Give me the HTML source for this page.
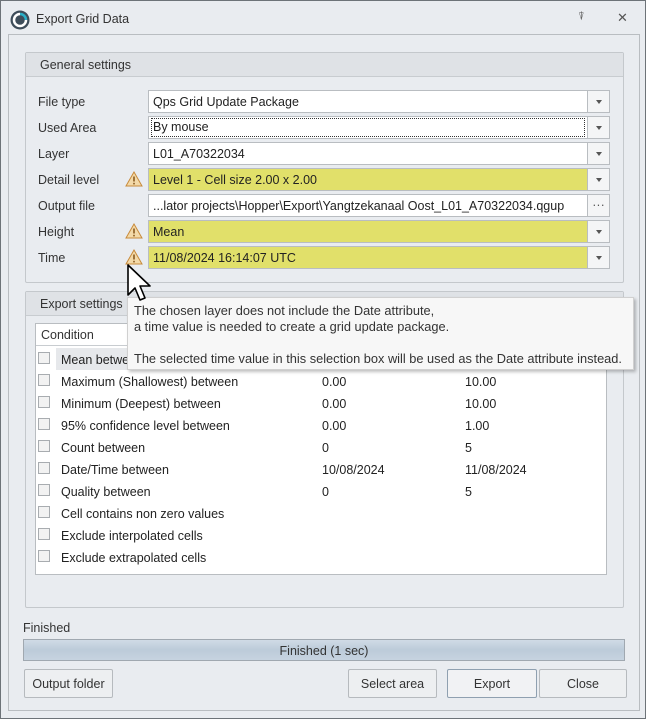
<!DOCTYPE html><html><head><style>
*{box-sizing:border-box;margin:0;padding:0}
body{width:646px;height:719px;background:#e9ecf0;font-family:"Liberation Sans",sans-serif;font-size:12.5px;color:#222;position:relative;overflow:hidden;border:1px solid #6d7378;white-space:nowrap}
.a{position:absolute}
.grp{position:absolute;border:1px solid #c4c8cc;border-radius:2px;background:#e9ecf0}
.gh{height:24px;background:#dfe2e6;border-bottom:1px solid #c8ccd0;padding:5px 14px;color:#333}
.lbl{position:absolute;left:37px;color:#333}
.fld{position:absolute;left:147px;width:440px;height:23px;border:1px solid #b9bdc1;background:#fff;padding:4px 4px;white-space:nowrap;overflow:hidden}
.y{background:#e1e06a}
.dd{position:absolute;left:586px;width:23px;height:23px;border:1px solid #b9bdc1;background:#f4f5f6}
.dd:after{content:"";position:absolute;left:8px;top:9px;border-left:3.5px solid transparent;border-right:3.5px solid transparent;border-top:4px solid #555}
.warn{position:absolute;left:124px}
.cb{position:absolute;left:37px;width:12px;height:12px;border:1px solid #a8acb0;background:#f2f2f2}
.btn{position:absolute;top:668px;height:29px;border:1px solid #b6babe;border-radius:2px;background:#edeff1;text-align:center;padding-top:7px;color:#333}
</style></head><body>
<svg class="a" style="left:9px;top:9px" width="20" height="20"><circle cx="10" cy="10" r="9.5" fill="#3e4d5a"/><path d="M10 4a6 6 0 1 0 6 6" stroke="#fff" stroke-width="2.5" fill="none"/><path d="M10 4a6 6 0 0 1 6 6" stroke="#2bb0c8" stroke-width="2.5" fill="none"/></svg>
<div class="a" style="left:35px;top:11px;color:#333">Export Grid Data</div>
<div class="a" style="left:577px;top:10px;font-size:11px;color:#555">⍒</div>
<div class="a" style="left:616px;top:9px;font-size:13px;color:#555">✕</div>
<div class="a" style="left:7px;top:33px;width:632px;height:677px;border:1px solid #b9bdc1"></div>

<div class="grp" style="left:24px;top:51px;width:599px;height:231px"><div class="gh">General settings</div></div>
<div class="lbl" style="top:94px">File type</div><div class="fld" style="top:89px">Qps Grid Update Package</div><div class="dd" style="top:89px"></div>
<div class="lbl" style="top:120px">Used Area</div><div class="fld" style="top:115px"><span style="outline:1px dotted #333;display:block;margin:-2px -1px;padding:1px 1px;height:17px">By mouse</span></div><div class="dd" style="top:115px"></div>
<div class="lbl" style="top:146px">Layer</div><div class="fld" style="top:141px">L01_A70322034</div><div class="dd" style="top:141px"></div>
<div class="lbl" style="top:172px">Detail level</div><div class="fld y" style="top:167px">Level 1 - Cell size 2.00 x 2.00</div><div class="dd" style="top:167px"></div>
<div class="lbl" style="top:198px">Output file</div><div class="fld" style="top:193px">...lator projects\Hopper\Export\Yangtzekanaal Oost_L01_A70322034.qgup</div><div class="a" style="left:586px;top:193px;width:23px;height:23px;border:1px solid #b9bdc1;background:#f4f5f6;text-align:center;color:#555;padding-top:3px">···</div>
<div class="lbl" style="top:224px">Height</div><div class="fld y" style="top:219px">Mean</div><div class="dd" style="top:219px"></div>
<div class="lbl" style="top:250px">Time</div><div class="fld y" style="top:245px">11/08/2024 16:14:07 UTC</div><div class="dd" style="top:245px"></div>
<svg class="warn" style="top:170px" width="18" height="16"><path d="M9 1L17 15H1Z" fill="#f3d9a8" stroke="#c88a3a"/><rect x="8.2" y="5.5" width="1.6" height="5" fill="#8a5a20"/><rect x="8.2" y="11.8" width="1.6" height="1.6" fill="#8a5a20"/></svg>
<svg class="warn" style="top:222px" width="18" height="16"><path d="M9 1L17 15H1Z" fill="#f3d9a8" stroke="#c88a3a"/><rect x="8.2" y="5.5" width="1.6" height="5" fill="#8a5a20"/><rect x="8.2" y="11.8" width="1.6" height="1.6" fill="#8a5a20"/></svg>
<svg class="warn" style="top:248px" width="18" height="16"><path d="M9 1L17 15H1Z" fill="#f3d9a8" stroke="#c88a3a"/><rect x="8.2" y="5.5" width="1.6" height="5" fill="#8a5a20"/><rect x="8.2" y="11.8" width="1.6" height="1.6" fill="#8a5a20"/></svg>

<div class="grp" style="left:24px;top:290px;width:599px;height:317px"><div class="gh">Export settings</div></div>
<div class="a" style="left:34px;top:322px;width:572px;height:252px;border:1px solid #b9bdc1;background:#fff"></div>
<div class="a" style="left:35px;top:323px;width:570px;height:22px;border-bottom:1px solid #c8ccd0;padding:4px 5px;color:#333">Condition</div>
<div class="a" style="left:55px;top:347px;width:550px;height:22px;background:#e6e8eb"></div>
<div class="cb" style="top:351px"></div><div class="a" style="left:60px;top:352px">Mean between</div>
<div class="cb" style="top:373px"></div><div class="a" style="left:60px;top:374px">Maximum (Shallowest) between</div><div class="a" style="left:321px;top:374px">0.00</div><div class="a" style="left:464px;top:374px">10.00</div>
<div class="cb" style="top:395px"></div><div class="a" style="left:60px;top:396px">Minimum (Deepest) between</div><div class="a" style="left:321px;top:396px">0.00</div><div class="a" style="left:464px;top:396px">10.00</div>
<div class="cb" style="top:417px"></div><div class="a" style="left:60px;top:418px">95% confidence level between</div><div class="a" style="left:321px;top:418px">0.00</div><div class="a" style="left:464px;top:418px">1.00</div>
<div class="cb" style="top:439px"></div><div class="a" style="left:60px;top:440px">Count between</div><div class="a" style="left:321px;top:440px">0</div><div class="a" style="left:464px;top:440px">5</div>
<div class="cb" style="top:461px"></div><div class="a" style="left:60px;top:462px">Date/Time between</div><div class="a" style="left:321px;top:462px">10/08/2024</div><div class="a" style="left:464px;top:462px">11/08/2024</div>
<div class="cb" style="top:483px"></div><div class="a" style="left:60px;top:484px">Quality between</div><div class="a" style="left:321px;top:484px">0</div><div class="a" style="left:464px;top:484px">5</div>
<div class="cb" style="top:505px"></div><div class="a" style="left:60px;top:506px">Cell contains non zero values</div>
<div class="cb" style="top:527px"></div><div class="a" style="left:60px;top:528px">Exclude interpolated cells</div>
<div class="cb" style="top:549px"></div><div class="a" style="left:60px;top:550px">Exclude extrapolated cells</div>

<div class="a" style="left:126px;top:296px;width:507px;height:73px;background:#f7f7f7;border:1px solid #d0d0d0;box-shadow:2px 2px 3px rgba(0,0,0,.25);padding:5px 6px;line-height:16px;color:#333;font-size:12.8px">The chosen layer does not include the Date attribute,<br>a time value is needed to create a grid update package.<br><br>The selected time value in this selection box will be used as the Date attribute instead.</div>
<svg class="a" style="left:125px;top:262px" width="30" height="40"><path d="M2 2V32L9 25L14 37L19 35L14 23H24Z" fill="#fff" stroke="#000" stroke-width="1.6" stroke-linejoin="round"/></svg>

<div class="a" style="left:22px;top:620px;color:#333">Finished</div>
<div class="a" style="left:22px;top:638px;width:602px;height:22px;border:1px solid #a0a8b0;background:linear-gradient(#d0dbe6,#bccbd9 50%,#c6d3e0);text-align:center;padding-top:4px;color:#333">Finished (1 sec)</div>
<div class="btn" style="left:23px;width:89px">Output folder</div>
<div class="btn" style="left:347px;width:89px">Select area</div>
<div class="btn" style="left:446px;width:90px;border-color:#8fa0b0;background:#f1f2f4">Export</div>
<div class="btn" style="left:538px;width:88px">Close</div>
</body></html>
